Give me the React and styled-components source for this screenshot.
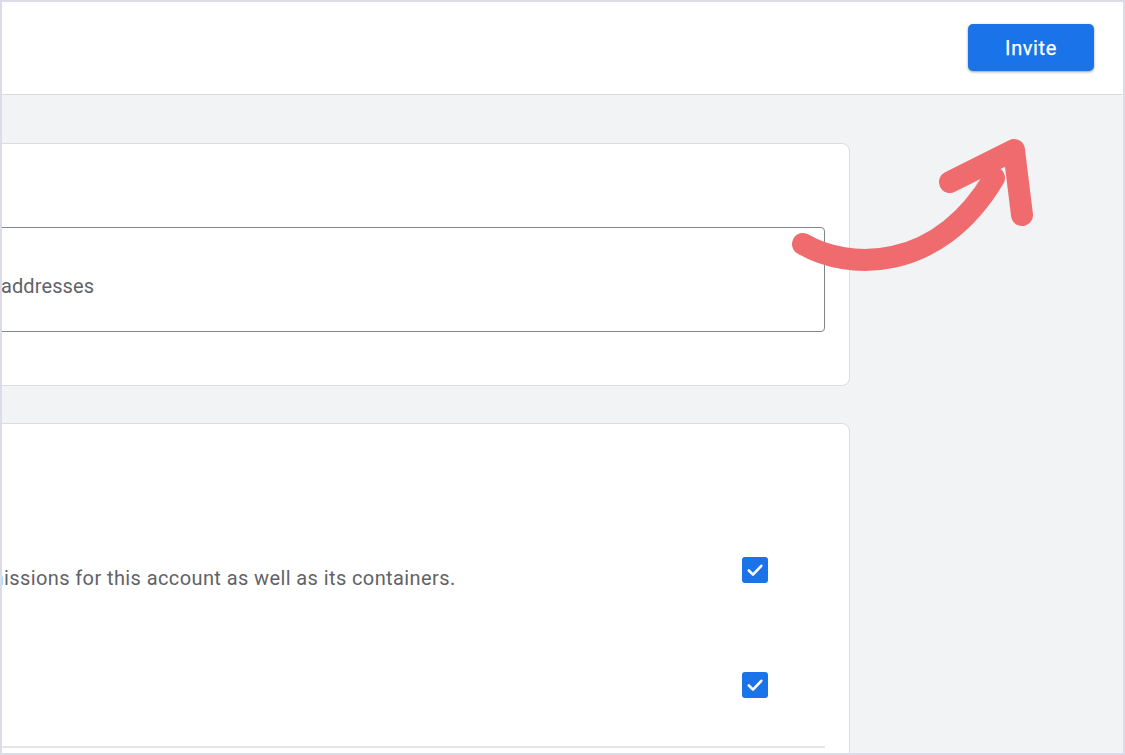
import React from 'react';
import styled, { createGlobalStyle } from 'styled-components';

const GlobalStyle = createGlobalStyle`
	html, body {
		margin: 0;
		padding: 0;
		background: #ffffff;
	}
	* {
		box-sizing: border-box;
	}
`

const Frame = styled.div`
	position: relative;
	width: 1125px;
	height: 755px;
	border: 2px solid #dcdbea;
	overflow: hidden;
	display: flex;
	flex-direction: column;
	background: #f1f3f4;
	font-family: Roboto, "Liberation Sans", Arial, sans-serif;
`

const Header = styled.header`
	flex: 0 0 93px;
	display: flex;
	align-items: flex-start;
	justify-content: flex-end;
	padding: 22px 29px 0 0;
	background: #ffffff;
	border-bottom: 1px solid #dadce0;
`

const InviteButton = styled.button`
	width: 126px;
	height: 47px;
	border: none;
	border-radius: 5px;
	background: #1a73e8;
	color: #ffffff;
	font-family: Roboto, "Liberation Sans", Arial, sans-serif;
	font-size: 20px;
	font-weight: 400;
	letter-spacing: 0.6px;
	-webkit-text-stroke: 0.25px #ffffff;
	box-shadow: 0 1px 3px rgba(60, 64, 67, 0.35), 0 1px 2px rgba(60, 64, 67, 0.2);
	cursor: pointer;
`

const Body = styled.main`
	flex: 1;
	padding-top: 48px;
`

const Column = styled.div`
	width: 908px;
	margin-left: -60px;
	display: flex;
	flex-direction: column;
	gap: 37px;
`

const Card = styled.section`
	background: #ffffff;
	border: 1px solid #dadce0;
	border-radius: 8px;
	padding: ${props => props.padding || '0 24px'};
	min-height: ${props => props.minHeight || 'auto'};
`

const EmailInput = styled.div`
	height: 105px;
	border: 1px solid #80868b;
	border-radius: 4px;
	display: flex;
	align-items: center;
	padding: 12px 0 0 33px;
	color: #5f6368;
	font-size: 20px;
	letter-spacing: 0.1px;
`

const PermissionRow = styled.div`
	display: flex;
	justify-content: space-between;
	align-items: flex-start;
	height: ${props => props.height}px;
`

const Description = styled.p`
	margin: 9px 0 0 19px;
	color: #5f6368;
	font-size: 20px;
	line-height: 24px;
	letter-spacing: 0.4px;
`

const CheckCell = styled.div`
	width: 83px;
	flex: 0 0 83px;
`

const Checkbox = styled.span`
	display: flex;
	align-items: center;
	justify-content: center;
	width: 26px;
	height: 26px;
	border-radius: 3px;
	background: #1a73e8;
`

const Divider = styled.hr`
	margin: 0;
	border: none;
	height: 2px;
	background: #e6e6e6;
`

const ArrowLayer = styled.svg`
	position: absolute;
	left: 0;
	top: 0;
	width: 1125px;
	height: 755px;
	pointer-events: none;
`

const Check = () => (
	<Checkbox>
		<svg width="20" height="20" viewBox="0 0 20 20" fill="none">
			<path d="M3.8 10.5 L8 14.6 L16.3 5.8" stroke="#ffffff" strokeWidth="2.6" strokeLinecap="round" strokeLinejoin="round" />
		</svg>
	</Checkbox>
)

const App = () => {
	return (
		<>
			<GlobalStyle />
			<Frame>
				<Header>
					<InviteButton>Invite</InviteButton>
				</Header>
				<Body>
					<Column>
						<Card padding="83px 24px 53px">
							<EmailInput>addresses</EmailInput>
						</Card>
						<Card padding="133px 24px 0" minHeight="400px">
							<PermissionRow height={115}>
								<Description>missions for this account as well as its containers.</Description>
								<CheckCell><Check /></CheckCell>
							</PermissionRow>
							<PermissionRow height={74}>
								<Description />
								<CheckCell><Check /></CheckCell>
							</PermissionRow>
							<Divider />
						</Card>
					</Column>
				</Body>
				<ArrowLayer viewBox="0 0 1125 755">
					<g stroke="#ef6b6e" strokeWidth="22" strokeLinecap="round" strokeLinejoin="round" fill="none">
						<path d="M801 242 C 845 268, 935 272, 992 176" />
						<path d="M948 180 L 1012 148 L 1020 213" />
					</g>
				</ArrowLayer>
			</Frame>
		</>
	);
}

export default App;
